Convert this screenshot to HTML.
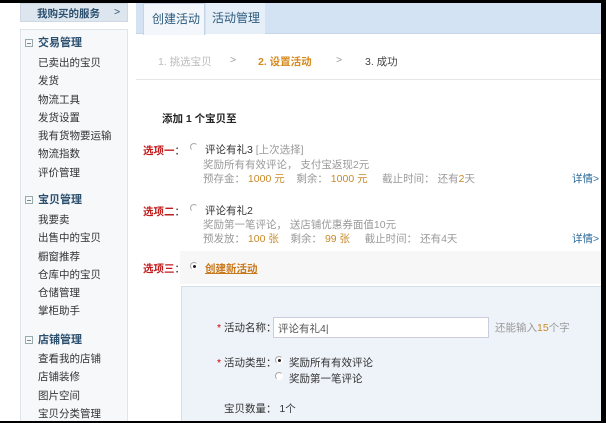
<!DOCTYPE html>
<html><head><meta charset="utf-8"><style>
*{margin:0;padding:0;box-sizing:border-box}
body{width:606px;height:423px;overflow:hidden;background:#000;position:relative;font-family:"Liberation Sans","Noto Sans CJK SC",sans-serif;font-size:10.5px;color:#333}
#pg{position:absolute;left:0;top:3px;width:601px;height:418px;background:#fff;overflow:hidden}
.a{position:absolute;white-space:nowrap}
.side{position:absolute;left:20px;top:26px;width:108px;height:400px;background:#f6f8fa;border:1px solid #dfe5eb}
.hd{font-weight:bold;color:#2b4f6e;font-size:11px}
.hd i{display:inline-block;width:8px;height:8px;border:1px solid #9aa;margin-right:5px;vertical-align:-1px;font-style:normal;position:relative}
.hd i:after{content:"";position:absolute;left:1px;top:3px;width:4px;height:1px;background:#788}
.gray{color:#999}
.or{color:#c98a2a}
.red{color:#c21d1d;font-weight:bold}
.rad{position:absolute;width:8px;height:8px;border-radius:50%;border:1px solid #aaa;border-right-color:#fff;border-bottom-color:#fff;background:#fff}
.rad.on:after{content:"";position:absolute;left:2px;top:2px;width:3px;height:3px;background:#222;border-radius:50%}
</style></head><body>
<div id="pg">
<div class="a" style="left:20px;top:0;width:108px;height:19px;background:#dde6ef;border:1px solid #ccd8e3;color:#2b4f6e;font-weight:bold;padding:2px 0 0 16px;font-size:10.5px">我购买的服务<span style="position:absolute;left:93px;top:2px;font-weight:normal">&gt;</span></div>
<div class="side"></div>
<div class="a hd" style="left:25px;top:31px"><i></i>交易管理</div>
<div class="a" style="left:38px;top:51px;line-height:18.3px">已卖出的宝贝<br>发货<br>物流工具<br>发货设置<br>我有货物要运输<br>物流指数<br>评价管理</div>
<div class="a hd" style="left:25px;top:188px"><i></i>宝贝管理</div>
<div class="a" style="left:38px;top:208px;line-height:18.3px">我要卖<br>出售中的宝贝<br>橱窗推荐<br>仓库中的宝贝<br>仓储管理<br>掌柜助手</div>
<div class="a hd" style="left:25px;top:328px"><i></i>店铺管理</div>
<div class="a" style="left:38px;top:347px;line-height:18.3px">查看我的店铺<br>店铺装修<br>图片空间<br>宝贝分类管理</div>

<div class="a" style="left:136px;top:0;width:465px;height:31px;background:#d4e3f3;border-bottom:1px solid #c5d5e6"></div>
<div class="a" style="left:143px;top:0;width:62px;height:32px;background:#f3f7fb;border:1px solid #c5d5e6;border-bottom:none;color:#2b5a7e;font-size:12px;padding:6px 0 0 8px">创建活动</div>
<div class="a" style="left:206px;top:0;width:59px;height:31px;background:#e6eef7;color:#2b5a7e;font-size:12px;padding:6px 0 0 6px">活动管理</div>

<div class="a gray" style="left:158px;top:51px;color:#bbb">1. 挑选宝贝</div>
<div class="a gray" style="left:230px;top:51px">&gt;</div>
<div class="a" style="left:258px;top:51px;color:#d68a1c;font-weight:bold">2. 设置活动</div>
<div class="a gray" style="left:336px;top:51px">&gt;</div>
<div class="a" style="left:365px;top:51px;color:#444">3. 成功</div>
<div class="a" style="left:136px;top:76px;width:465px;height:1px;background:#e6e6e6"></div>

<div class="a" style="left:162px;top:108px;font-weight:bold;color:#222">添加 1 个宝贝至</div>

<div class="a red" style="left:143px;top:140px">选项一<span style="color:#333;font-weight:normal">：</span></div>
<div class="rad" style="left:190px;top:140px"></div>
<div class="a" style="left:205px;top:139px;color:#333">评论有礼3 <span class="gray">[上次选择]</span></div>
<div class="a gray" style="left:203px;top:154px">奖励所有有效评论， 支付宝返现2元</div>
<div class="a gray" style="left:203px;top:168px">预存金： <span class="or">1000 元</span> &nbsp; &nbsp;剩余： <span class="or">1000 元</span> &nbsp; &nbsp; 截止时间： 还有<span class="or">2</span>天</div>
<div class="a" style="left:572px;top:168px;color:#2b6a9a">详情&gt;</div>

<div class="a red" style="left:143px;top:201px">选项二<span style="color:#333;font-weight:normal">：</span></div>
<div class="rad" style="left:190px;top:201px"></div>
<div class="a" style="left:205px;top:200px;color:#333">评论有礼2</div>
<div class="a gray" style="left:203px;top:214px">奖励第一笔评论， 送店铺优惠券面值10元</div>
<div class="a gray" style="left:203px;top:228px">预发放： <span class="or">100 张</span> &nbsp; &nbsp;剩余： <span class="or">99 张</span> &nbsp; &nbsp; 截止时间： 还有4天</div>
<div class="a" style="left:572px;top:228px;color:#2b6a9a">详情&gt;</div>

<div class="a" style="left:180px;top:248px;width:421px;height:33px;background:#f7f7f7"></div>
<div class="a red" style="left:143px;top:258px">选项三<span style="color:#333;font-weight:normal">：</span></div>
<div class="rad on" style="left:190px;top:259px"></div>
<div class="a" style="left:205px;top:258px;color:#c9791e;font-weight:bold;text-decoration:underline">创建新活动</div>

<div class="a" style="left:181px;top:283px;width:421px;height:140px;background:#eef3f9;border:1px solid #d5dfea"></div>
<div class="a" style="left:217px;top:317px"><span style="color:#c00">*</span> 活动名称：</div>
<div class="a" style="left:273px;top:314px;width:216px;height:21px;background:#fff;border:1px solid #ccd;padding:3px 0 0 4px;color:#555">评论有礼4|</div>
<div class="a gray" style="left:495px;top:317px">还能输入<span class="or">15</span>个字</div>
<div class="a" style="left:217px;top:352px"><span style="color:#c00">*</span> 活动类型：</div>
<div class="rad on" style="left:275px;top:353px"></div>
<div class="a" style="left:289px;top:352px">奖励所有有效评论</div>
<div class="rad" style="left:275px;top:369px"></div>
<div class="a" style="left:289px;top:368px">奖励第一笔评论</div>
<div class="a" style="left:224px;top:398px">宝贝数量： 1个</div>
</div>
</body></html>
